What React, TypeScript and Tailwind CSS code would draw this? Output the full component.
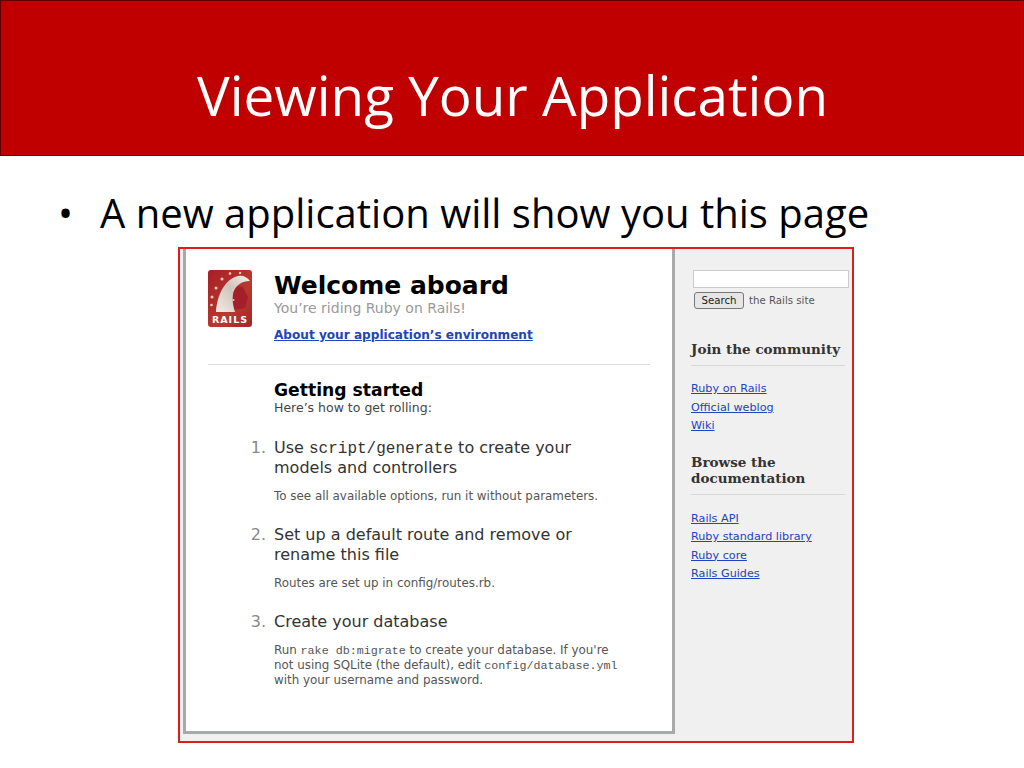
import { ReactNode } from "react";

const verdana = "font-['DejaVu_Sans',sans-serif]";

function RailsLogo() {
  return (
    <svg width="44" height="57" viewBox="0 0 44 57" className="block">
      <defs>
        <linearGradient id="logoBg" x1="0" y1="0" x2="1" y2="1">
          <stop offset="0" stopColor="#a81f26" />
          <stop offset="0.6" stopColor="#b8392f" />
          <stop offset="1" stopColor="#a3262a" />
        </linearGradient>
        <linearGradient id="rail" x1="0" y1="1" x2="1" y2="0">
          <stop offset="0" stopColor="#f3ece6" />
          <stop offset="0.55" stopColor="#cfc4bb" />
          <stop offset="1" stopColor="#f6f1ec" />
        </linearGradient>
      </defs>
      <rect width="44" height="57" rx="3" fill="url(#logoBg)" />
      <path d="M25 15l10 2 5 10-3 11-12 2-3-12z" fill="#a3202a" />
      <path d="M8 42C9 25 17 9 30 6c5-1 9 1 12 5-8 0-15 4-17 13-1 6 0 12 2 18z" fill="url(#rail)" />
      <g fill="#f1cfc0">
        <circle cx="8" cy="18" r="1.5" />
        <circle cx="14" cy="9" r="1.5" />
        <circle cx="22" cy="3.5" r="1.3" />
        <circle cx="32" cy="3" r="1.2" />
        <circle cx="4" cy="27" r="1.5" />
        <circle cx="3.5" cy="35" r="1.3" />
        <circle cx="25" cy="20" r="1" />
        <circle cx="25.5" cy="30" r="1" />
      </g>
      <text x="22" y="53" textAnchor="middle" fontFamily="'DejaVu Sans',sans-serif" fontWeight="700" fontSize="9.5" letterSpacing="1" fill="#fff">RAILS</text>
    </svg>
  );
}

function Step({ n, title, children }: { n: string; title: ReactNode; children: ReactNode }) {
  return (
    <div className="flex">
      <div className="w-[66px] pr-[8px] text-right text-[16px] leading-[20px] text-[#888]">{n}</div>
      <div className="flex-1">
        <div className="text-[16px] leading-[20px] text-[#333]">{title}</div>
        <div className="mt-[11px] text-[11.9px] leading-[15px] text-[#555]">{children}</div>
      </div>
    </div>
  );
}

function Code({ children, size = "text-[11.7px]" }: { children: ReactNode; size?: string }) {
  return <span className={`font-['Liberation_Mono',monospace] leading-none ${size}`}>{children}</span>;
}

function SideLink({ children }: { children: ReactNode }) {
  return <div className="text-[11.2px] leading-[18.5px] text-[#2244bb] underline">{children}</div>;
}

function SideHead({ children }: { children: ReactNode }) {
  return (
    <div className="border-b border-[#d8d8d8] pb-[8px] font-['DejaVu_Serif',serif] text-[13.5px] leading-[16px] font-bold text-[#333]">
      {children}
    </div>
  );
}

export default function App() {
  return (
    <div className="h-[768px] w-[1024px] overflow-hidden bg-white font-['Open_Sans',sans-serif]">
      <header className="flex h-[156px] items-center border border-[#5e0000] bg-[#c00000] pl-[196px]">
        <h1 className="pt-[34px] text-[54.8px] leading-none text-white">Viewing Your Application</h1>
      </header>

      <div className="flex h-[91px] items-center pt-[22px] pl-[58px] text-[40px] text-black">
        <span className="w-[42px] text-[40px]">•</span>
        <span>A new application will show you this page</span>
      </div>

      <div className={`ml-[178px] flex h-[496px] w-[676px] border-2 border-[#dd1c1c] bg-[#f0f0f0] ${verdana}`}>
        <div className="mb-[7px] ml-[3px] flex w-[492px] flex-col border-r-[3px] border-b-[3px] border-l-[3px] border-[#a8aaaa] bg-white pt-[21px] pl-[22px]">
          <div className="flex">
            <RailsLogo />
            <div className="ml-[22px]">
              <div className="pt-[1px] text-[25px] leading-[30px] font-bold text-black">Welcome aboard</div>
              <div className="text-[14px] leading-[15px] text-[#999]">You’re riding Ruby on Rails!</div>
              <div className="mt-[10px] text-[12.1px] leading-[18px] font-bold text-[#2244bb] underline">
                About your application’s environment
              </div>
            </div>
          </div>
          <div className="mt-[20px] mr-[22px] border-t border-[#ddd]" />
          <div className="mt-[14px] ml-[66px]">
            <div className="text-[17.2px] leading-[22px] font-bold text-black">Getting started</div>
            <div className="text-[12.5px] leading-[14px] text-[#444]">Here’s how to get rolling:</div>
          </div>
          <div className="mt-[23px] mr-[50px] flex flex-col gap-[21px]">
            <Step
              n="1."
              title={
                <>
                  Use <Code size="text-[16px]">script/generate</Code> to create your
                  <br />
                  models and controllers
                </>
              }
            >
              To see all available options, run it without parameters.
            </Step>
            <Step n="2." title={<>Set up a default route and remove or<br />rename this file</>}>
              Routes are set up in config/routes.rb.
            </Step>
            <Step n="3." title="Create your database">
              Run <Code>rake db:migrate</Code> to create your database. If you're
              <br />
              not using SQLite (the default), edit <Code>config/database.yml</Code>
              <br />
              with your username and password.
            </Step>
          </div>
        </div>

        <aside className="ml-[16px] flex-1 pt-[21px] pr-[3px]">
          <div className="ml-[2px] h-[18px] border border-[#ccc] bg-white" />
          <div className="mt-[4px] flex items-center">
            <div className="ml-[3px] flex h-[17px] w-[50px] items-center justify-center rounded-[3px] border border-[#777] bg-[#e6e6e6] text-[10.2px] text-[#222]">
              Search
            </div>
            <span className="ml-[5px] text-[10.2px] text-[#555]">the Rails site</span>
          </div>
          <div className="mt-[32px] mr-[4px]">
            <SideHead>Join the community</SideHead>
            <div className="mt-[14px]">
              <SideLink>Ruby on Rails</SideLink>
              <SideLink>Official weblog</SideLink>
              <SideLink>Wiki</SideLink>
            </div>
          </div>
          <div className="mt-[18px] mr-[4px]">
            <SideHead>
              Browse the
              <br />
              documentation
            </SideHead>
            <div className="mt-[15px]">
              <SideLink>Rails API</SideLink>
              <SideLink>Ruby standard library</SideLink>
              <SideLink>Ruby core</SideLink>
              <SideLink>Rails Guides</SideLink>
            </div>
          </div>
        </aside>
      </div>
    </div>
  );
}
